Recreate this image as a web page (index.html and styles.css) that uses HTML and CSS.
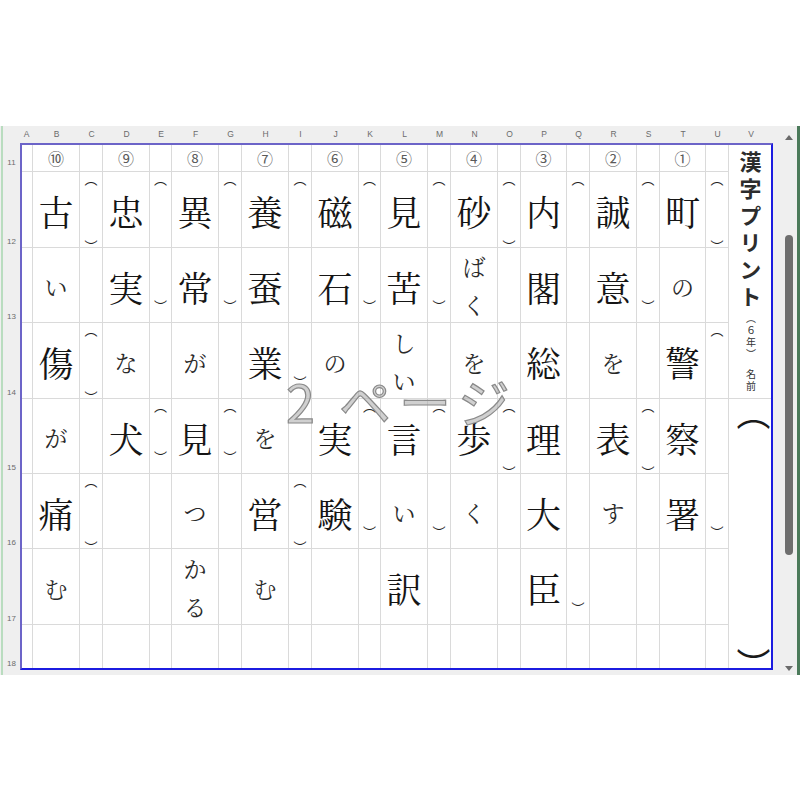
FILE: index.html
```html
<!DOCTYPE html>
<html lang="ja">
<head>
<meta charset="utf-8">
<title>漢字プリント</title>
<link rel="stylesheet" href="styles.css">
</head>
<body>
<div class="space"></div>
<div class="sheet">
  <div class="rowhdr">
    <div class="rh corner"></div>
    <div class="rh r11">11</div>
    <div class="rh r12">12</div>
    <div class="rh r13">13</div>
    <div class="rh r14">14</div>
    <div class="rh r15">15</div>
    <div class="rh r16">16</div>
    <div class="rh r17">17</div>
    <div class="rh r18">18</div>
  </div>
  <div class="main">
    <div class="colhdr">
      <span>A</span><span>B</span><span>C</span><span>D</span><span>E</span><span>F</span><span>G</span><span>H</span><span>I</span><span>J</span><span>K</span><span>L</span><span>M</span><span>N</span><span>O</span><span>P</span><span>Q</span><span>R</span><span>S</span><span>T</span><span>U</span><span>V</span>
    </div>
    <div class="page">
      <!-- row 11 -->
      <div class="c"></div>
      <div class="c num">⑩</div><div class="c"></div>
      <div class="c num">⑨</div><div class="c"></div>
      <div class="c num">⑧</div><div class="c"></div>
      <div class="c num">⑦</div><div class="c"></div>
      <div class="c num">⑥</div><div class="c"></div>
      <div class="c num">⑤</div><div class="c"></div>
      <div class="c num">④</div><div class="c"></div>
      <div class="c num">③</div><div class="c"></div>
      <div class="c num">②</div><div class="c"></div>
      <div class="c num">①</div><div class="c"></div>
      <div class="c title">
        <div class="ttl"><span class="big">漢字プリント</span><span class="small">（６年）</span><span class="small gap">名前</span></div>
      </div>
      <!-- row 12 -->
      <div class="c"></div>
      <div class="c k">古</div><div class="c n"><span class="t">︵</span><span class="b">︶</span></div>
      <div class="c k">忠</div><div class="c n"><span class="t">︵</span></div>
      <div class="c k">異</div><div class="c n"><span class="t">︵</span></div>
      <div class="c k">養</div><div class="c n"><span class="t">︵</span></div>
      <div class="c k">磁</div><div class="c n"><span class="t">︵</span></div>
      <div class="c k">見</div><div class="c n"><span class="t">︵</span></div>
      <div class="c k">砂</div><div class="c n"><span class="t">︵</span><span class="b">︶</span></div>
      <div class="c k">内</div><div class="c n"><span class="t">︵</span></div>
      <div class="c k">誠</div><div class="c n"><span class="t">︵</span></div>
      <div class="c k">町</div><div class="c n"><span class="t">︵</span><span class="b">︶</span></div>
      <!-- row 13 -->
      <div class="c"></div>
      <div class="c h">い</div><div class="c"></div>
      <div class="c k">実</div><div class="c n"><span class="b2">︶</span></div>
      <div class="c k">常</div><div class="c n"><span class="b2">︶</span></div>
      <div class="c k">蚕</div><div class="c"></div>
      <div class="c k">石</div><div class="c n"><span class="b2">︶</span></div>
      <div class="c k">苦</div><div class="c n"><span class="b2">︶</span></div>
      <div class="c hh"><span>ば</span><span>く</span></div><div class="c"></div>
      <div class="c k">閣</div><div class="c"></div>
      <div class="c k">意</div><div class="c n"><span class="b2">︶</span></div>
      <div class="c h">の</div><div class="c"></div>
      <!-- row 14 -->
      <div class="c"></div>
      <div class="c k">傷</div><div class="c n"><span class="t">︵</span><span class="b">︶</span></div>
      <div class="c h">な</div><div class="c"></div>
      <div class="c h">が</div><div class="c"></div>
      <div class="c k">業</div><div class="c n"><span class="b2">︶</span></div>
      <div class="c h">の</div><div class="c"></div>
      <div class="c hh"><span>し</span><span>い</span></div><div class="c"></div>
      <div class="c h">を</div><div class="c"></div>
      <div class="c k">総</div><div class="c"></div>
      <div class="c h">を</div><div class="c"></div>
      <div class="c k">警</div><div class="c n"><span class="t">︵</span></div>
      <!-- row 15 -->
      <div class="c"></div>
      <div class="c h">が</div><div class="c"></div>
      <div class="c k">犬</div><div class="c n"><span class="t">︵</span><span class="b2">︶</span></div>
      <div class="c k">見</div><div class="c n"><span class="t">︵</span><span class="b2">︶</span></div>
      <div class="c h">を</div><div class="c"></div>
      <div class="c k">実</div><div class="c n"><span class="t">︵</span></div>
      <div class="c k">言</div><div class="c n"><span class="t">︵</span></div>
      <div class="c k">歩</div><div class="c n"><span class="t">︵</span><span class="b">︶</span></div>
      <div class="c k">理</div><div class="c"></div>
      <div class="c k">表</div><div class="c n"><span class="t">︵</span><span class="b">︶</span></div>
      <div class="c k">察</div><div class="c"></div>
      <div class="c name"><span class="nt">︵</span><span class="nb">︶</span></div>
      <!-- row 16 -->
      <div class="c"></div>
      <div class="c k">痛</div><div class="c n"><span class="t">︵</span><span class="b">︶</span></div>
      <div class="c"></div><div class="c"></div>
      <div class="c h">つ</div><div class="c"></div>
      <div class="c k">営</div><div class="c n"><span class="t">︵</span><span class="b">︶</span></div>
      <div class="c k">験</div><div class="c n"><span class="b2">︶</span></div>
      <div class="c h">い</div><div class="c n"><span class="b2">︶</span></div>
      <div class="c h">く</div><div class="c"></div>
      <div class="c k">大</div><div class="c"></div>
      <div class="c h">す</div><div class="c"></div>
      <div class="c k">署</div><div class="c n"><span class="b2">︶</span></div>
      <!-- row 17 -->
      <div class="c"></div>
      <div class="c h">む</div><div class="c"></div>
      <div class="c"></div><div class="c"></div>
      <div class="c hh"><span>か</span><span>る</span></div><div class="c"></div>
      <div class="c h">む</div><div class="c"></div>
      <div class="c"></div><div class="c"></div>
      <div class="c k">訳</div><div class="c"></div>
      <div class="c"></div><div class="c"></div>
      <div class="c k">臣</div><div class="c n"><span class="b2">︶</span></div>
      <div class="c"></div><div class="c"></div>
      <div class="c"></div><div class="c"></div>
      <!-- row 18 -->
      <div class="c"></div>
      <div class="c"></div><div class="c"></div>
      <div class="c"></div><div class="c"></div>
      <div class="c"></div><div class="c"></div>
      <div class="c"></div><div class="c"></div>
      <div class="c"></div><div class="c"></div>
      <div class="c"></div><div class="c"></div>
      <div class="c"></div><div class="c"></div>
      <div class="c"></div><div class="c"></div>
      <div class="c"></div><div class="c"></div>
      <div class="c"></div><div class="c"></div>

      <div class="frame"></div>
      <div class="wm"><span class="wm-d">2</span>ページ</div>
    </div>
  </div>
  <div class="vscroll">
    <div class="arrow"><span class="tri up"></span></div>
    <div class="track"><div class="thumb"></div></div>
    <div class="arrow down-wrap"><span class="tri down"></span></div>
  </div>
</div>
</body>
</html>
```

FILE: styles.css
```css
:root {
  --cols: 13px 47px 23px 47px 22px 47px 23px 47px 23px 47px 22px 47px 23px 47px 23px 46px 23px 47px 23px 46px 23px 44px;
  --jp: "Noto Serif CJK JP", "Noto Sans CJK JP", serif;
  --gothic: "Noto Sans CJK JP", sans-serif;
  --grid: #dadada;
}

html, body {
  margin: 0;
  padding: 0;
  background: #ffffff;
}

body {
  width: 800px;
  height: 800px;
  overflow: hidden;
}

.space {
  height: 126px;
}

.sheet {
  display: flex;
  height: 549px;
  padding-left: 1px;
  box-sizing: border-box;
  background: #efefef;
}

/* row headers */
.rowhdr {
  width: 19px;
  border-left: 2px solid #b9dcbf;
  box-sizing: border-box;
  display: flex;
  flex-direction: column;
}

.rh {
  display: flex;
  align-items: flex-end;
  justify-content: center;
  padding-bottom: 2px;
  box-sizing: border-box;
  font: 8px/9px "Liberation Sans", Arial, sans-serif;
  color: #6b6b6b;
}

.corner { height: 17px; padding: 0; }
.r11 { height: 29px; padding-bottom: 5px; }
.r12 { height: 76px; }
.r13 { height: 75px; }
.r14 { height: 76px; }
.r15 { height: 75px; }
.r16 { height: 75px; }
.r17 { height: 76px; }
.r18 { height: 45px; }

/* main area */
.main {
  width: 753px;
  display: flex;
  flex-direction: column;
}

.colhdr {
  display: grid;
  grid-template-columns: var(--cols);
  height: 17px;
  align-items: center;
  text-align: center;
  font: 8.5px/1 "Liberation Sans", Arial, sans-serif;
  color: #6b6b6b;
}

.page {
  position: relative;
  display: grid;
  grid-template-columns: var(--cols);
  grid-template-rows: 29px 76px 75px 76px 75px 75px 76px 45px;
  background: #ffffff;
}

.c {
  min-width: 0;
  border-right: 1px solid var(--grid);
  border-bottom: 1px solid var(--grid);
  display: flex;
  align-items: center;
  justify-content: center;
  color: #151515;
  font-family: var(--jp);
}

.num {
  font-family: var(--gothic);
  font-size: 16px;
  line-height: 1;
  color: #5a5a5a;
  padding-top: 2px;
}

.k {
  font-size: 35px;
  line-height: 1;
  padding-top: 4px;
}

.h {
  font-size: 23px;
  line-height: 1;
  color: #2a2a2a;
  padding-top: 3px;
}

.hh {
  flex-direction: column;
  font-size: 23px;
  line-height: 38px;
  color: #2a2a2a;
  padding-top: 2px;
}

/* bracket cells */
.n {
  flex-direction: column;
  justify-content: flex-start;
  font-family: var(--gothic);
  color: #222;
}

.n span {
  display: block;
  font-size: 13px;
  line-height: 13px;
  height: 13px;
}

.t {
  margin-top: 0;
}

.b {
  margin-top: auto;
  margin-bottom: -5px;
}

.b2 {
  margin-top: auto;
  margin-bottom: 10px;
}

/* title column */
.title {
  grid-row: span 4;
  align-items: flex-start;
  padding-top: 8px;
}

.ttl {
  writing-mode: vertical-rl;
  font-family: var(--gothic);
  color: #2c2c2c;
}

.big {
  font-size: 22px;
  font-weight: 700;
  letter-spacing: 5px;
}

.small {
  font-size: 10px;
  letter-spacing: 2px;
  color: #333;
}

.gap {
  margin-inline-start: 8px;
}

.name {
  grid-row: span 4;
  flex-direction: column;
  justify-content: space-between;
  padding-left: 6px;
  font-family: var(--gothic);
  color: #1a1a1a;
}

.nt, .nb {
  display: block;
  font-size: 34px;
  line-height: 34px;
  height: 34px;
}

.nt {
  margin-top: -4px;
}

.nb {
  margin-bottom: -12px;
}

/* overlays */
.frame {
  position: absolute;
  inset: 0;
  border-top: 2px solid #6c64c8;
  border-left: 2px solid #6c64c8;
  border-right: 2px solid #1c1ce0;
  border-bottom: 2px solid #1c1ce0;
  pointer-events: none;
}

.wm {
  position: absolute;
  left: 266px;
  top: 232px;
  font-family: var(--gothic);
  font-size: 52px;
  line-height: 1;
  letter-spacing: 8px;
  color: rgba(170, 170, 170, 0.55);
  -webkit-text-stroke: 1.2px #8a8a8a;
  white-space: nowrap;
  pointer-events: none;
}

.wm-d {
  margin-right: 16px;
}

/* vertical scrollbar */
.vscroll {
  width: 27px;
  box-sizing: border-box;
  padding-left: 8px;
  border-right: 3px solid #4b7a5a;
  display: flex;
  flex-direction: column;
}

.arrow {
  height: 20px;
  display: flex;
  align-items: center;
  justify-content: center;
  padding-top: 2px;
  box-sizing: border-box;
}

.down-wrap {
  height: 14px;
  padding-top: 0;
}

.tri {
  width: 0;
  height: 0;
  border-left: 4px solid transparent;
  border-right: 4px solid transparent;
}

.up {
  border-bottom: 5px solid #6a6a6a;
}

.down {
  border-top: 5px solid #6a6a6a;
}

.track {
  flex: 1;
  display: flex;
  justify-content: center;
}

.thumb {
  width: 8px;
  height: 320px;
  margin-top: 89px;
  border-radius: 4px;
  background: #6e6e6e;
}
```
